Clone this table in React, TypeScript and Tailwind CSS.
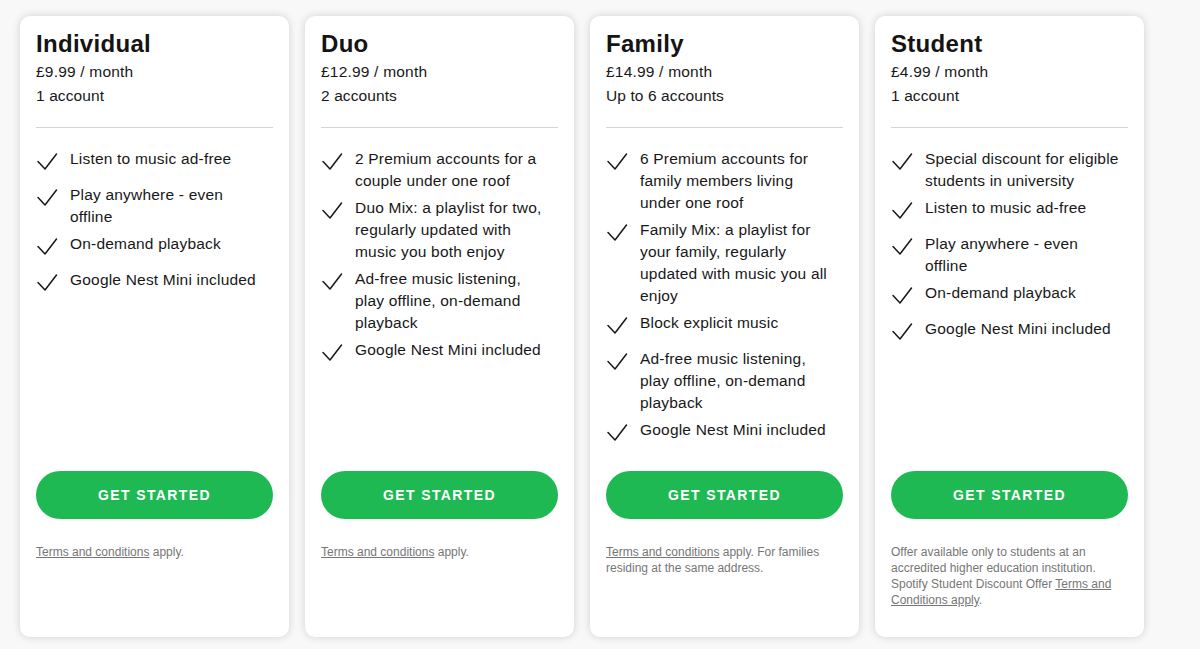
import React from 'react';

interface Plan {
  name: string;
  price: string;
  accounts: string;
  features: string[][];
  terms: React.ReactNode;
}

const Check = () => (
  <svg width="24" height="24" viewBox="0 0 24 24" fill="none" className="shrink-0 mt-px">
    <path d="M2 12.5 L9 20 L20.5 5" stroke="#181818" strokeWidth="1.5" strokeLinecap="round" strokeLinejoin="round" />
  </svg>
);

const TermsLink = ({ children }: { children: React.ReactNode }) => (
  <a href="#" className="underline underline-offset-1">{children}</a>
);

const plans: Plan[] = [
  {
    name: 'Individual',
    price: '£9.99 / month',
    accounts: '1 account',
    features: [
      ['Listen to music ad-free'],
      ['Play anywhere - even', 'offline'],
      ['On-demand playback'],
      ['Google Nest Mini included'],
    ],
    terms: (
      <>
        <TermsLink>Terms and conditions</TermsLink> apply.
      </>
    ),
  },
  {
    name: 'Duo',
    price: '£12.99 / month',
    accounts: '2 accounts',
    features: [
      ['2 Premium accounts for a', 'couple under one roof'],
      ['Duo Mix: a playlist for two,', 'regularly updated with', 'music you both enjoy'],
      ['Ad-free music listening,', 'play offline, on-demand', 'playback'],
      ['Google Nest Mini included'],
    ],
    terms: (
      <>
        <TermsLink>Terms and conditions</TermsLink> apply.
      </>
    ),
  },
  {
    name: 'Family',
    price: '£14.99 / month',
    accounts: 'Up to 6 accounts',
    features: [
      ['6 Premium accounts for', 'family members living', 'under one roof'],
      ['Family Mix: a playlist for', 'your family, regularly', 'updated with music you all', 'enjoy'],
      ['Block explicit music'],
      ['Ad-free music listening,', 'play offline, on-demand', 'playback'],
      ['Google Nest Mini included'],
    ],
    terms: (
      <>
        <TermsLink>Terms and conditions</TermsLink> apply. For families
        <br />
        residing at the same address.
      </>
    ),
  },
  {
    name: 'Student',
    price: '£4.99 / month',
    accounts: '1 account',
    features: [
      ['Special discount for eligible', 'students in university'],
      ['Listen to music ad-free'],
      ['Play anywhere - even', 'offline'],
      ['On-demand playback'],
      ['Google Nest Mini included'],
    ],
    terms: (
      <>
        Offer available only to students at an
        <br />
        accredited higher education institution.
        <br />
        Spotify Student Discount Offer <TermsLink>Terms and</TermsLink>
        <br />
        <TermsLink>Conditions apply</TermsLink>.
      </>
    ),
  },
];

function PlanCard({ plan }: { plan: Plan }) {
  return (
    <div className="w-[269px] h-[621px] bg-white rounded-[10px] shadow-[0_0_8px_rgba(0,0,0,0.16)] px-4 pt-3 flex flex-col">
      <h2 className="text-[24px] leading-8 font-bold text-[#141414] tracking-[0.3px]">{plan.name}</h2>
      <div className="text-[15.5px] leading-6 text-[#181818] tracking-[0.2px]">{plan.price}</div>
      <div className="text-[15.5px] leading-6 text-[#181818] tracking-[0.1px]">{plan.accounts}</div>
      <div className="mt-[19px] border-t border-[#d4d4d4]" />
      <ul className="mt-[20px] flex-1">
        {plan.features.map((lines, i) => (
          <li key={i} className="flex gap-2.5 min-h-[31px] mb-[5px]">
            <Check />
            <span className="text-[15.5px] leading-[22px] text-[#181818] tracking-[0.2px]">
              {lines.map((l, j) => (
                <React.Fragment key={j}>
                  {j > 0 && <br />}
                  {l}
                </React.Fragment>
              ))}
            </span>
          </li>
        ))}
      </ul>
      <button className="h-12 w-full rounded-full bg-[#1fb954] text-white text-[14px] font-bold tracking-[0.1em]">
        GET STARTED
      </button>
      <p className="mt-[25px] h-[93px] text-[12px] leading-4 text-[#767676]">{plan.terms}</p>
    </div>
  );
}

export default function App() {
  return (
    <div
      className="min-h-[649px] w-[1200px] bg-[#f8f8f8] pt-4 pl-5 flex gap-4"
      style={{ fontFamily: '"Liberation Sans", Arial, sans-serif' }}
    >
      {plans.map((p) => (
        <PlanCard key={p.name} plan={p} />
      ))}
    </div>
  );
}
